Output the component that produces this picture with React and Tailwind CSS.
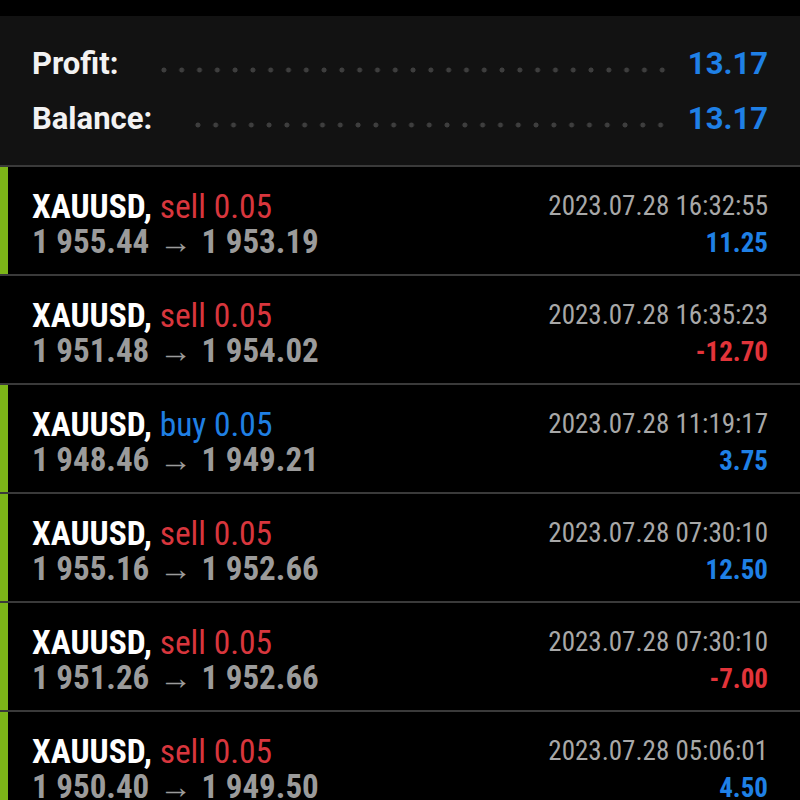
const trades = [
  { side: "sell", open: "1 955.44", close: "1 953.19", time: "2023.07.28 16:32:55", profit: "11.25", bar: true },
  { side: "sell", open: "1 951.48", close: "1 954.02", time: "2023.07.28 16:35:23", profit: "-12.70", bar: false },
  { side: "buy", open: "1 948.46", close: "1 949.21", time: "2023.07.28 11:19:17", profit: "3.75", bar: true },
  { side: "sell", open: "1 955.16", close: "1 952.66", time: "2023.07.28 07:30:10", profit: "12.50", bar: true },
  { side: "sell", open: "1 951.26", close: "1 952.66", time: "2023.07.28 07:30:10", profit: "-7.00", bar: true },
  { side: "sell", open: "1 950.40", close: "1 949.50", time: "2023.07.28 05:06:01", profit: "4.50", bar: true },
];

function Dots({ className }) {
  return (
    <div
      className={
        "h-[6px] flex-1 bg-[radial-gradient(circle,#3e3e3e_2.2px,transparent_2.8px)] bg-[length:17.8px_6px] bg-repeat-x " +
        className
      }
    />
  );
}

function Row({ t }) {
  const loss = t.profit.startsWith("-");
  return (
    <div className="flex h-[109px] border-b-2 border-[#3a3a3a]">
      <div className={t.bar ? "w-[8px] bg-[#7cb518]" : "w-[8px]"} />
      <div className="flex flex-1 justify-between pl-[24px] pr-[32px] pt-[22px] font-['Roboto'] font-stretch-condensed">
        <div className="flex flex-col">
          <div className="h-[35px] text-[33.5px] leading-[35px]">
            <span className="font-bold text-white">XAUUSD,</span>{" "}
            <span className={t.side === "buy" ? "text-[#1f7fe3]" : "text-[#d8363d]"}>
              {t.side} 0.05
            </span>
          </div>
          <div className="h-[35px] text-[33px] font-bold leading-[35px] text-[#9b9b9b]">
            {t.open} <span className="px-[2px] font-normal">→</span> {t.close}
          </div>
        </div>
        <div className="flex flex-col items-end">
          <div className="h-[35px] text-[27px] leading-[35px] text-[#a8a8a8]">{t.time}</div>
          <div
            className={
              "mt-[2px] h-[35px] text-[27px] font-bold leading-[35px] " +
              (loss ? "text-[#e2343a]" : "text-[#1f80e6]")
            }
          >
            {t.profit}
          </div>
        </div>
      </div>
    </div>
  );
}

export default function App() {
  return (
    <div className="h-[800px] w-[800px] overflow-hidden bg-black font-['Roboto',sans-serif]">
      <div className="h-[16px] bg-black" />
      <div className="flex h-[151px] flex-col gap-[27px] border-b-2 border-[#3a3a3a] bg-[#121212] px-[32px] pt-[34px]">
        <div className="flex h-[28px] items-center">
          <span className="text-[31px] font-bold text-[#f2f2f2]">Profit:</span>
          <Dots className="ml-[36px] mr-[16px] mt-[11px]" />
          <span className="text-[31px] font-bold text-[#1f80e6]">13.17</span>
        </div>
        <div className="flex h-[28px] items-center">
          <span className="text-[31px] font-bold text-[#f2f2f2]">Balance:</span>
          <Dots className="ml-[37px] mr-[16px] mt-[11px]" />
          <span className="text-[31px] font-bold text-[#1f80e6]">13.17</span>
        </div>
      </div>
      {trades.map((t, i) => (
        <Row key={i} t={t} />
      ))}
    </div>
  );
}
